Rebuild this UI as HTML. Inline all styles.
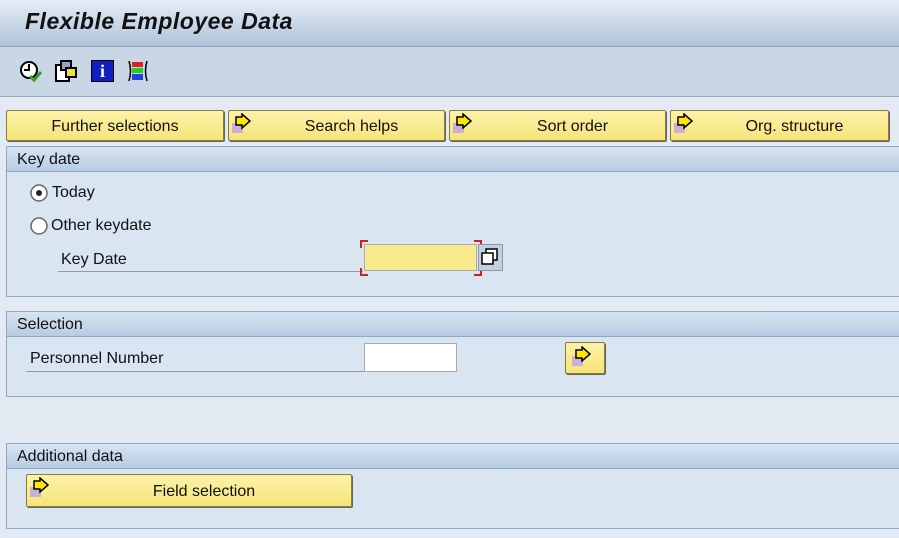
<html><head><style>
body{margin:0;width:899px;height:538px;background:#e3eaf3;font-family:"Liberation Sans",sans-serif;position:relative;overflow:hidden}
.a{position:absolute}
.title{left:0;top:0;width:899px;height:46px;background:linear-gradient(#e6edf5,#aec3da);border-bottom:1px solid #8fa6bf}
.title span{position:absolute;left:25px;top:8px;font-size:23px;font-weight:bold;font-style:italic;color:#111;letter-spacing:.5px}
.tb{left:0;top:47px;width:899px;height:49px;background:#c8d6e5;border-bottom:1px solid #99aabb}
.btn{position:absolute;height:31px;background:linear-gradient(#fcf2a8,#f6e47a);border:1px solid #8a7d3a;border-radius:2px;box-shadow:1px 1px 0 #666;font-size:16px;color:#111;line-height:32px;text-align:center;box-sizing:border-box}
.grp{position:absolute;left:6px;width:893px;border:1px solid #8ea7c4;border-right:none;background:#d9e5f1;box-sizing:border-box}
.gh{height:24px;background:linear-gradient(#d8e4f1,#b7cbe2);border-bottom:1px solid #8ea7c4;font-size:16px;line-height:25px;padding-left:10px;color:#111}
.lbl{position:absolute;font-size:16px;color:#111}
.ico{position:absolute}
</style></head><body>
<div class="a title"><span>Flexible Employee Data</span></div>
<div class="a tb">
<svg class="ico" style="left:18px;top:12px" width="26" height="24" viewBox="0 0 26 24"><circle cx="11" cy="11" r="8" fill="#fff" stroke="#000" stroke-width="2"/><path d="M11 5v6h-5" stroke="#000" stroke-width="2" fill="none"/><path d="M12 17l4 4 7-8" stroke="#3a9a2a" stroke-width="3" fill="none"/></svg>
<svg class="ico" style="left:54px;top:12px" width="24" height="24" viewBox="0 0 24 24"><rect x="2" y="6" width="13" height="16" fill="#fff" stroke="#000" stroke-width="2"/><rect x="7" y="2" width="10" height="9" fill="#9aa0c8" stroke="#000" stroke-width="2"/><rect x="12" y="9" width="10" height="9" fill="#f0e040" stroke="#000" stroke-width="2"/></svg>
<div class="ico" style="left:91px;top:13px;width:21px;height:20px;background:#1020c0;border:1px solid #000;color:#fff;font:bold 18px 'Liberation Serif',serif;text-align:center;line-height:20px">i</div>
<svg class="ico" style="left:126px;top:12px" width="24" height="24" viewBox="0 0 24 24"><path d="M3 2q3 10 0 20M21 2q-3 10 0 20" stroke="#000" fill="none" stroke-width="1.5"/><rect x="6" y="3" width="11" height="5" fill="#e02020"/><rect x="6" y="9" width="11" height="5" fill="#20d020"/><rect x="6" y="15" width="11" height="6" fill="#2040e0"/></svg>
</div>
<div class="btn" style="left:6px;top:110px;width:218px">Further selections</div>
<div class="btn" style="left:228px;top:110px;width:217px;padding-left:30px">Search helps</div>
<div class="btn" style="left:449px;top:110px;width:217px;padding-left:30px">Sort order</div>
<div class="btn" style="left:670px;top:110px;width:219px;padding-left:30px">Org. structure</div>
<svg class="ico" style="left:231px;top:113px" width="24" height="22" viewBox="0 0 24 22"><rect x="1" y="10" width="11" height="10" fill="#c8b0d8"/><path d="M5 4h6v-3l8 7-8 7v-3h-6z" fill="#ffe800" stroke="#000" stroke-width="1.5"/></svg>
<svg class="ico" style="left:452px;top:113px" width="24" height="22" viewBox="0 0 24 22"><rect x="1" y="10" width="11" height="10" fill="#c8b0d8"/><path d="M5 4h6v-3l8 7-8 7v-3h-6z" fill="#ffe800" stroke="#000" stroke-width="1.5"/></svg>
<svg class="ico" style="left:673px;top:113px" width="24" height="22" viewBox="0 0 24 22"><rect x="1" y="10" width="11" height="10" fill="#c8b0d8"/><path d="M5 4h6v-3l8 7-8 7v-3h-6z" fill="#ffe800" stroke="#000" stroke-width="1.5"/></svg>

<div class="grp" style="top:146px;height:151px"><div class="gh">Key date</div></div>
<svg class="ico" style="left:29px;top:183px" width="20" height="20"><circle cx="10" cy="10" r="8" fill="#fff" stroke="#666" stroke-width="1.5"/><circle cx="10" cy="10" r="3" fill="#222"/></svg>
<div class="lbl" style="left:52px;top:184px">Today</div>
<svg class="ico" style="left:29px;top:216px" width="20" height="20"><circle cx="10" cy="10" r="8" fill="#fff" stroke="#666" stroke-width="1.5"/></svg>
<div class="lbl" style="left:51px;top:217px">Other keydate</div>
<div class="lbl" style="left:61px;top:251px">Key Date</div>
<div class="a" style="left:58px;top:271px;width:305px;height:1px;background:#999"></div>
<div class="a" style="left:364px;top:244px;width:113px;height:27px;background:#f8e98c;border:1px solid #aaa;box-sizing:border-box"></div>
<svg class="ico" style="left:360px;top:240px" width="122" height="36"><path d="M1 8V1h7M114 1h7v7M1 28v7h7M121 28v7h-7" stroke="#d02020" stroke-width="2" fill="none"/></svg>
<div class="a" style="left:478px;top:244px;width:25px;height:27px;background:#c4d0dd;border:1px solid #8899aa;box-sizing:border-box"></div>
<svg class="ico" style="left:481px;top:248px" width="18" height="18"><rect x="5" y="1" width="11" height="11" fill="#fff" stroke="#000" stroke-width="1.5"/><rect x="1" y="5" width="11" height="11" fill="#fff" stroke="#000" stroke-width="1.5"/></svg>

<div class="grp" style="top:311px;height:86px"><div class="gh">Selection</div></div>
<div class="lbl" style="left:30px;top:350px">Personnel Number</div>
<div class="a" style="left:26px;top:371px;width:340px;height:1px;background:#999"></div>
<div class="a" style="left:364px;top:343px;width:93px;height:29px;background:#fff;border:1px solid #aaa;box-sizing:border-box"></div>
<div class="btn" style="left:565px;top:342px;width:40px;height:32px"></div>
<svg class="ico" style="left:571px;top:346px" width="24" height="22" viewBox="0 0 24 22"><rect x="1" y="10" width="11" height="10" fill="#c8b0d8"/><path d="M5 4h6v-3l8 7-8 7v-3h-6z" fill="#ffe800" stroke="#000" stroke-width="1.5"/></svg>

<div class="grp" style="top:443px;height:86px"><div class="gh">Additional data</div></div>
<div class="btn" style="left:26px;top:474px;width:326px;height:33px;line-height:34px;padding-left:30px">Field selection</div>
<svg class="ico" style="left:29px;top:477px" width="24" height="22" viewBox="0 0 24 22"><rect x="1" y="10" width="11" height="10" fill="#c8b0d8"/><path d="M5 4h6v-3l8 7-8 7v-3h-6z" fill="#ffe800" stroke="#000" stroke-width="1.5"/></svg>
</body></html>
